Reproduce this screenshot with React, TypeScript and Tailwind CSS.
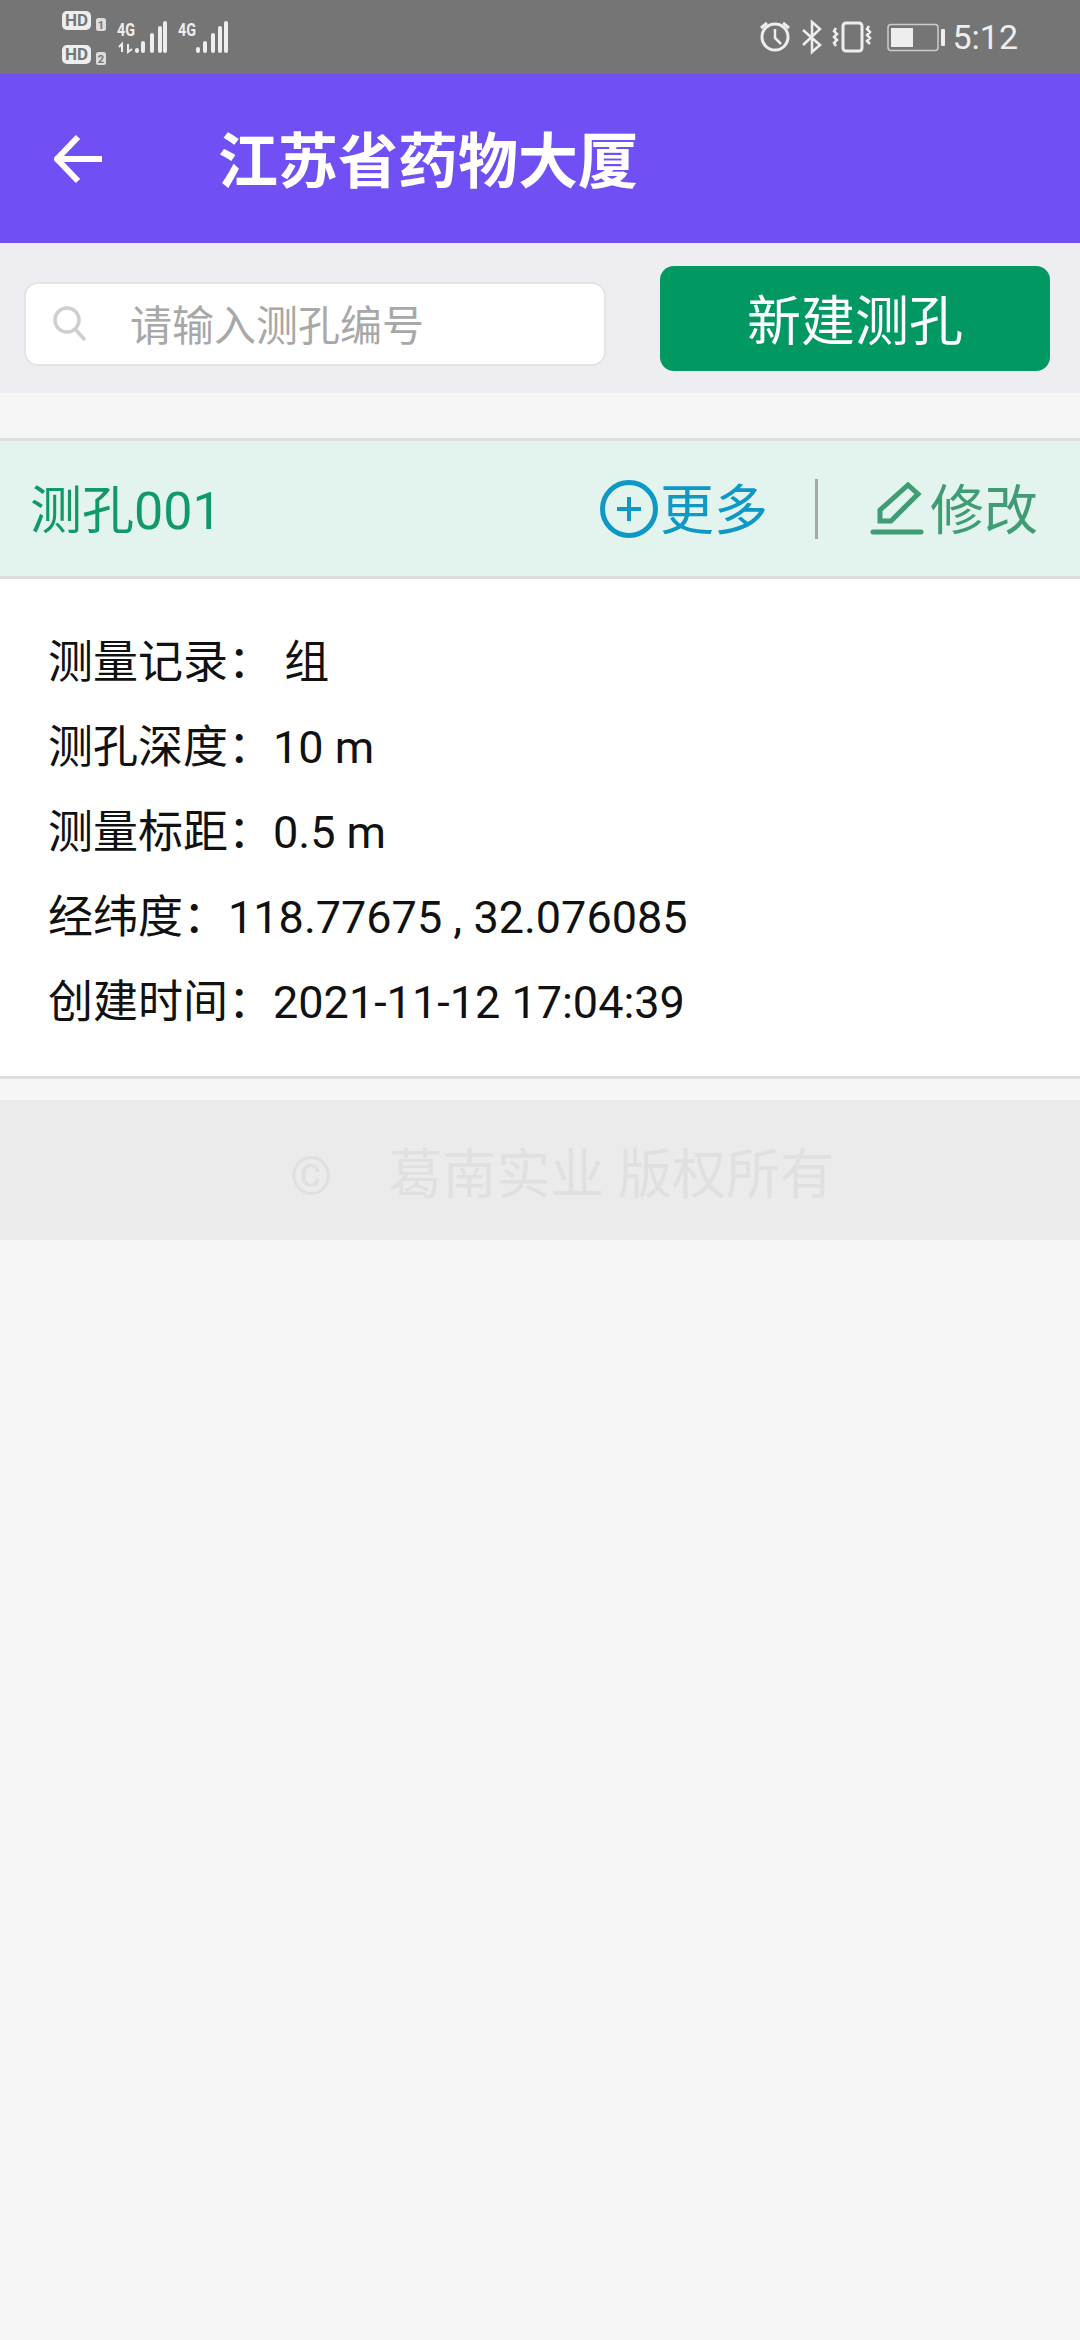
const SignalIcons = () => (
  <svg width="175" height="74" viewBox="60 0 175 74" fill="none">
    <rect x="62" y="11" width="29" height="19" rx="5" fill="#eeeeee" />
    <text x="76.5" y="26" textAnchor="middle" fontSize="17" fontWeight="700" fill="#757575" fontFamily="Roboto">HD</text>
    <rect x="96" y="18" width="10" height="13" rx="2.5" fill="#dddddd" />
    <text x="101" y="29" textAnchor="middle" fontSize="11" fontWeight="700" fill="#757575" fontFamily="Roboto">1</text>
    <rect x="62" y="45" width="29" height="19" rx="5" fill="#eeeeee" />
    <text x="76.5" y="60" textAnchor="middle" fontSize="17" fontWeight="700" fill="#757575" fontFamily="Roboto">HD</text>
    <rect x="96" y="52" width="10" height="13" rx="2.5" fill="#dddddd" />
    <text x="101" y="63" textAnchor="middle" fontSize="11" fontWeight="700" fill="#757575" fontFamily="Roboto">2</text>
    <text x="117" y="36" fontSize="19" fontWeight="700" fill="#eeeeee" fontFamily="Roboto" textLength="18" lengthAdjust="spacingAndGlyphs">4G</text>
    <path d="M122 52V44l-3 3M128 44v8l4-3" stroke="#eeeeee" strokeWidth="2" />
    <g stroke="#eeeeee" strokeWidth="4" strokeLinecap="round">
      <path d="M137 50v1M143 43v8M152 35v16M160 28v23M165 23v28" />
    </g>
    <text x="178" y="36" fontSize="19" fontWeight="700" fill="#eeeeee" fontFamily="Roboto" textLength="18" lengthAdjust="spacingAndGlyphs">4G</text>
    <g stroke="#eeeeee" strokeWidth="4" strokeLinecap="round">
      <path d="M198 49v2M205 43v8M213 35v16M220 28v23M226 23v28" />
    </g>
  </svg>
);

const DeviceIcons = () => (
  <svg width="190" height="74" viewBox="757 0 190 74" fill="none" stroke="#eeeeee">
    <circle cx="774" cy="37" r="13" strokeWidth="3" />
    <path d="M774 29v9l6 6" strokeWidth="2.5" />
    <path d="M760 28l6-5M788 28l-6-5" strokeWidth="3" />
    <path d="M802 30l17 15-8 7V22l8 7-17 16" strokeWidth="2.5" />
    <rect x="842" y="23" width="19" height="28" rx="3" strokeWidth="3" />
    <path d="M835 28l-2 3 3 3-3 3 3 3-3 3 2 3M868 26l-2 3 3 3-3 3 3 3-3 3 3 3" strokeWidth="2.5" />
    <rect x="887" y="24.5" width="50" height="26" rx="3" strokeWidth="1.5" stroke="#cccccc" />
    <rect x="890" y="28" width="22" height="19" fill="#eeeeee" stroke="none" />
    <rect x="940" y="29" width="4" height="17" rx="1" fill="#eeeeee" stroke="none" />
  </svg>
);

const BackArrow = () => (
  <svg width="50" height="50" viewBox="0 0 50 50" fill="none" stroke="#ffffff" strokeWidth="6">
    <path d="M1 25h47M24 3L3 25l21 22" />
  </svg>
);

const SearchIcon = () => (
  <svg width="38" height="38" viewBox="0 0 38 38" fill="none" stroke="#cfcfcf" strokeWidth="3.5">
    <circle cx="15" cy="15" r="12" />
    <path d="M23 24l10 11" />
  </svg>
);

const PlusCircle = () => (
  <svg width="58" height="58" viewBox="0 0 58 58" fill="none" stroke="#0e98c6">
    <circle cx="29" cy="29" r="26.5" strokeWidth="5" />
    <path d="M17 29h24M29 17v24" strokeWidth="4" />
  </svg>
);

const PenIcon = () => (
  <svg width="54" height="54" viewBox="0 0 54 54" fill="none" stroke="#3f9c74">
    <path d="M10 39V28L38 3l10 9-27 27z" strokeWidth="5" />
    <path d="M3 50h48" strokeLinecap="round" strokeWidth="5" />
  </svg>
);

const records = [
  ["测量记录：", " 组"],
  ["测孔深度：", "10 m"],
  ["测量标距：", "0.5 m"],
  ["经纬度：", "118.77675 , 32.076085"],
  ["创建时间：", "2021-11-12 17:04:39"],
];

export default function App() {
  return (
    <div className="min-h-[2340px] bg-[#f6f6f6] font-['Roboto','Noto_Sans_CJK_SC',sans-serif]">
      {/* Status bar */}
      <div className="h-[74px] bg-[#757575] flex items-center justify-between pl-[60px] pr-[62px]">
        <SignalIcons />
        <div className="flex items-center gap-[4px]">
          <DeviceIcons />
          <span className="text-[34px] text-[#eeeeee] leading-none">5:12</span>
        </div>
      </div>

      {/* Header */}
      <div className="h-[169px] bg-[#7050f5] flex items-center pl-[54px]">
        <BackArrow />
        <span className="ml-[114px] pt-[8px] text-[60px] font-bold text-white leading-none">江苏省药物大厦</span>
      </div>

      {/* Search */}
      <div className="h-[150px] bg-[#eeeef2] flex items-start pl-[24px] pr-[30px] pt-[23px] justify-between">
        <div className="mt-[16px] w-[582px] h-[84px] bg-white border-2 border-[#e4e4e4] rounded-[14px] flex items-center pl-[26px]">
          <SearchIcon />
          <span className="ml-[40px] pt-[6px] text-[42px] text-[#a8a8a8] leading-none">请输入测孔编号</span>
        </div>
        <div className="w-[390px] h-[105px] bg-[#029861] rounded-[14px] flex items-center justify-center pt-[8px] text-[54px] text-white leading-none">
          新建测孔
        </div>
      </div>

      {/* Card */}
      <div className="mt-[45px] border-y-[3px] border-[#dddddd] bg-white">
        <div className="h-[138px] bg-[#e3f3ee] border-b-[3px] border-[#dddddd] flex items-center pl-[30px] pr-[42px]">
          <span className="pt-[6px] text-[52px] text-[#0f9a68] leading-none">测孔001</span>
          <div className="ml-auto flex items-center">
            <PlusCircle />
            <span className="ml-[2px] pt-[6px] text-[54px] text-[#0e98c6] leading-none">更多</span>
            <div className="ml-[47px] w-[3px] h-[60px] bg-[#a6a6a6]" />
            <div className="ml-[52px]"><PenIcon /></div>
            <span className="ml-[6px] pt-[6px] text-[54px] text-[#3f9c74] leading-none">修改</span>
          </div>
        </div>
        <div className="h-[497px] pl-[48px] pt-[41px] flex flex-col">
          {records.map(([label, value]) => (
            <div key={label} className="h-[85px] flex items-center text-[45px] text-[#111111] leading-none whitespace-pre">
              <span>{label}</span>
              <span>{value}</span>
            </div>
          ))}
        </div>
      </div>

      {/* Footer */}
      <div className="mt-[21px] h-[140px] bg-[#ebebeb] flex items-center justify-center pt-[12px] pl-[44px] text-[54px] text-[#e0e0e0] leading-none">
        <span className="mr-[56px]">©</span>
        <span>葛南实业 版权所有</span>
      </div>
    </div>
  );
}
